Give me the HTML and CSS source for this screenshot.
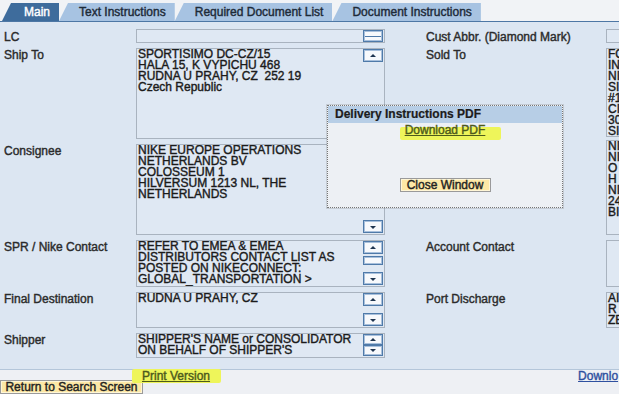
FILE: index.html
```html
<!DOCTYPE html>
<html lang="en">

<head>
    <meta charset="UTF-8">
    <title>Delivery Instructions</title>
    <link rel="stylesheet" href="styles.css">
</head>

<body>
    <div class="page">
        <!-- Tabs -->
        <div class="tabs">
            <span class="tab active">Main</span>
            <span class="tab">Text Instructions</span>
            <span class="tab">Required Document List</span>
            <span class="tab">Document Instructions</span>
        </div>

        <!-- Form -->
        <div class="form">
            <div class="label l lc">LC</div>
            <div class="field l f-lc">
                <div class="text"></div>
                <span class="hthumb"></span>
            </div>
            <div class="label r lc">Cust Abbr. (Diamond Mark)</div>
            <div class="field r f-lc"></div>

            <div class="label l">Ship To</div>
            <div class="field l f-addr">
                <div class="text">SPORTISIMO DC-CZ/15<br>HALA 15, K VYPICHU 468<br>RUDNA U PRAHY, CZ&nbsp; 252 19<br>Czech Republic</div>
                <div class="scroll"><span class="sbtn up"></span><span class="sbtn down"></span></div>
            </div>
            <div class="label r">Sold To</div>
            <div class="field r f-sold">
                <div class="text">FO<br>IN<br>NI<br>SI<br>#1<br>CI<br>30<br>SI</div>
            </div>

            <div class="label l">Consignee</div>
            <div class="field l f-addr">
                <div class="text">NIKE EUROPE OPERATIONS<br>NETHERLANDS BV<br>COLOSSEUM 1<br>HILVERSUM 1213 NL, THE<br>NETHERLANDS</div>
                <div class="scroll"><span class="sbtn up"></span><span class="sbtn down"></span></div>
            </div>
            <div class="field r f-cons">
                <div class="text">NI<br>NI<br>O<br>H<br>NI<br>24<br>BI</div>
            </div>

            <div class="label l">SPR / Nike Contact</div>
            <div class="field l f-contact">
                <div class="text">REFER TO EMEA &amp; EMEA<br>DISTRIBUTORS CONTACT LIST AS<br>POSTED ON NIKECONNECT:<br>GLOBAL_TRANSPORTATION &gt;</div>
                <div class="scroll"><span class="sbtn up"></span><span class="thumb"></span><span class="sbtn down"></span></div>
            </div>
            <div class="label r">Account Contact</div>
            <div class="field r f-contact"></div>

            <div class="label l">Final Destination</div>
            <div class="field l f-dest">
                <div class="text">RUDNA U PRAHY, CZ</div>
                <div class="scroll"><span class="sbtn up"></span><span class="sbtn down"></span></div>
            </div>
            <div class="label r">Port Discharge</div>
            <div class="field r f-dest">
                <div class="text">AI<br>R<br>ZE</div>
            </div>

            <div class="label l">Shipper</div>
            <div class="field l f-shipper">
                <div class="text">SHIPPER'S NAME or CONSOLIDATOR<br>ON BEHALF OF SHIPPER'S</div>
                <div class="scroll compact"><span class="sbtn up"></span><span class="sbtn down"></span></div>
            </div>
        </div>

        <!-- Footer -->
        <div class="footer">
            <div class="links">
                <a href="#" class="hl print">Print Version</a>
                <a href="#" class="dl">Downlo</a>
            </div>
            <button class="btn back">Return to Search Screen</button>
        </div>

        <!-- Popup -->
        <div class="popup">
            <div class="popup-head">Delivery Instructions PDF</div>
            <div class="popup-body">
                <a href="#" class="hl pdf">Download PDF</a>
                <button class="btn close">Close Window</button>
            </div>
        </div>
    </div>
</body>

</html>
```

FILE: styles.css
```css
/* Global */
* {
    margin: 0;
    padding: 0;
    box-sizing: border-box;
}

body {
    font-family: "Liberation Sans", Arial, sans-serif;
    font-size: 12px;
    line-height: 11px;
    color: #222;
    background: #eef0f4;
    -webkit-text-stroke: 0.4px currentColor;
}

.page {
    position: relative;
    width: 619px;
    height: 394px;
    overflow: hidden;
}

/* Tabs */
.tabs {
    display: flex;
    height: 22px;
    padding: 3px 0 0 2px;
    background: #f1f3f6;
    border-bottom: 1px solid #4d77a5;
}

.tab {
    height: 18px;
    line-height: 18px;
    padding: 0 9px 0 20px;
    background: #a7c3e2;
    color: #1d2a38;
    white-space: nowrap;
    clip-path: polygon(9px 0, 100% 0, 100% 100%, 0 100%);
}

.tab.active {
    background: #3e6c9c;
    color: #fff;
    padding-left: 22px;
}

/* Form grid */
.form {
    display: grid;
    grid-template-columns: 132px 249px 41px 180px 160px;
    row-gap: 5px;
    align-items: start;
    padding: 7px 0 11px 4px;
    background: #dce6f2;
    border-bottom: 1px solid #b4c6da;
    width: 780px;
}

.label {
    padding-top: 2px;
    color: #2b2b2b;
    white-space: nowrap;
}

.label.lc {
    padding-top: 3px;
}

.l.label { grid-column: 1; }
.l.field { grid-column: 2; }
.r.label { grid-column: 4; }
.r.field { grid-column: 5; }

.field {
    display: flex;
    border: 1px solid #a9b3bf;
    background: #dfe8f3;
    overflow: hidden;
}

.text {
    flex: 1;
    padding: 0 1px;
    color: #1b1b1b;
    white-space: nowrap;
}

.f-lc { height: 14px; }
.f-addr { height: 91px; }
.f-sold { height: 89px; }
.f-cons { height: 95px; margin-top: -4px; }
.f-contact { height: 47px; }
.f-dest { height: 36px; }
.f-shipper { height: 25px; }

/* Scroll buttons */
.scroll {
    width: 20px;
    flex-shrink: 0;
    margin: 0 1px 1px 0;
    display: flex;
    flex-direction: column;
    justify-content: space-between;
}

.sbtn,
.thumb,
.hthumb {
    display: block;
    border: 1px solid #4f7aa9;
    box-shadow: inset 0 0 0 1px #a8c0dc;
    background: #f7f9fc;
}

.sbtn {
    position: relative;
    height: 13px;
}

.sbtn::after {
    content: "";
    position: absolute;
    left: 6px;
    top: 4px;
    border-left: 3.5px solid transparent;
    border-right: 3.5px solid transparent;
}

.sbtn.up::after {
    border-bottom: 3px solid #1f3550;
}

.sbtn.down::after {
    top: 5px;
    border-top: 3px solid #1f3550;
}

.thumb {
    height: 9px;
    margin-top: -6px;
}

.compact .sbtn {
    height: 11px;
}

.compact .sbtn::after {
    top: 3px;
}

.hthumb {
    width: 20px;
    height: 12px;
    flex-shrink: 0;
    margin-right: 1px;
    background: linear-gradient(#f7f9fc 5px, #4f7aa9 5px, #4f7aa9 6px, #f7f9fc 6px);
}

/* Footer */
.footer {
    height: 24px;
}

.links {
    display: flex;
    height: 10px;
    padding-top: 1px;
    white-space: nowrap;
}

a {
    font-size: 12px;
}

.hl {
    position: relative;
    z-index: 0;
    color: #4d5a1c;
}

.hl::before {
    content: "";
    position: absolute;
    z-index: -1;
    background: #eef55a;
    border-radius: 2px;
}

.print {
    margin-left: 142px;
}

.print::before {
    left: -10px;
    right: -11px;
    top: -2px;
    bottom: -3px;
}

.dl {
    margin-left: 368px;
    color: #2f50a0;
}

.btn {
    font-family: inherit;
    font-size: 12px;
    line-height: 11px;
    color: #222;
    background: #fde8a6;
    border: 1px solid #9a9a9a;
    box-shadow: inset 0 0 0 1px #fff6d6;
    -webkit-text-stroke: 0.4px currentColor;
}

.back {
    display: block;
    width: 143px;
    height: 14px;
}

/* Popup */
.popup {
    position: absolute;
    left: 327px;
    top: 105px;
    width: 236px;
    height: 103px;
    border: 1px dotted #777;
    background: #edf0f4;
    box-shadow: 0 0 0 1px rgba(120, 120, 120, 0.25);
}

.popup-head {
    height: 17px;
    padding: 3px 0 0 7px;
    background: #b7cee6;
    font-weight: bold;
    color: #1c1c1c;
    -webkit-text-stroke: 0.2px currentColor;
}

.popup-body {
    display: flex;
    flex-direction: column;
    align-items: center;
    padding-top: 2px;
}

.pdf::before {
    left: -5px;
    right: -16px;
    top: 2px;
    bottom: -4px;
}

.close {
    width: 91px;
    height: 14px;
    margin-top: 42px;
}
```
